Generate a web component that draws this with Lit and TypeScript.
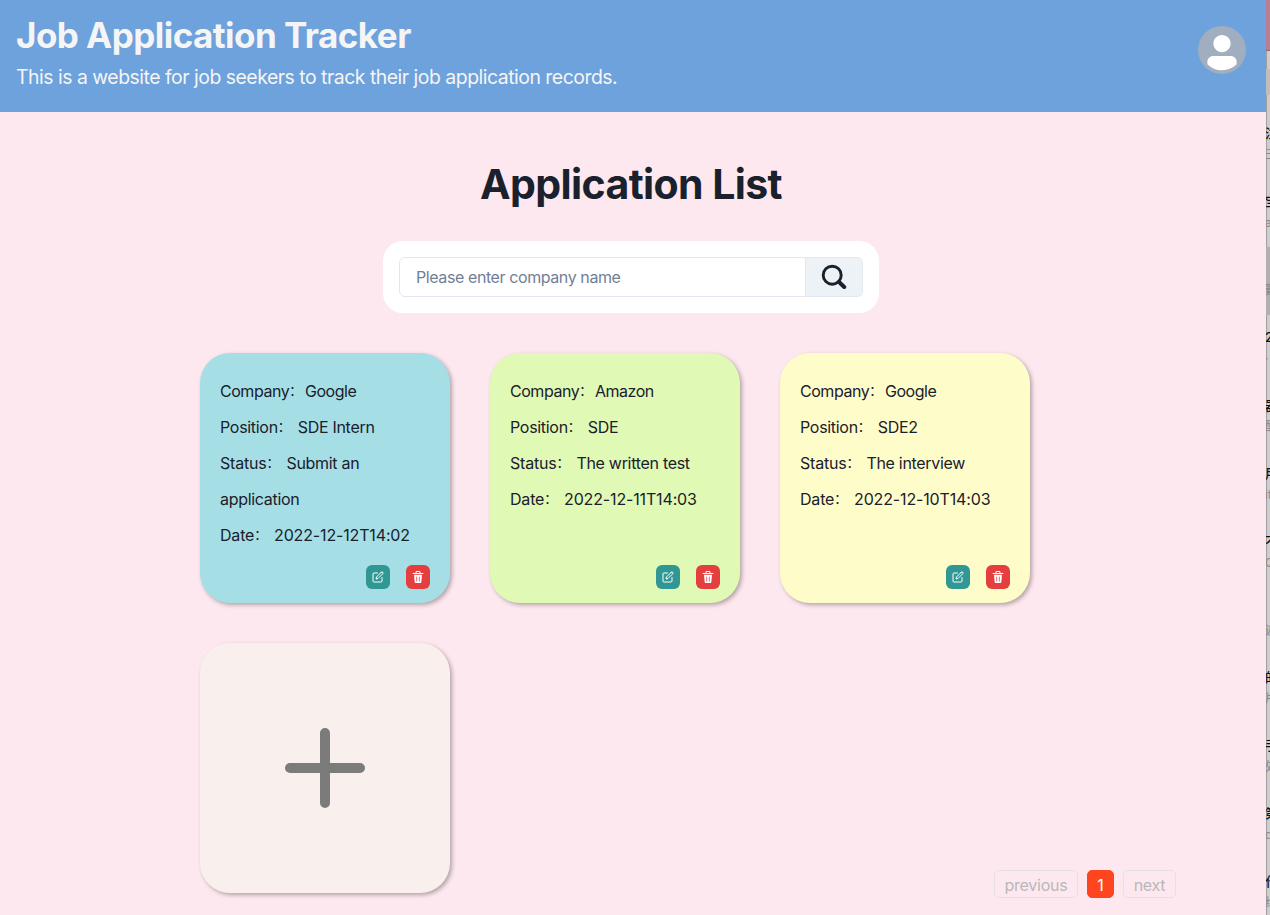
import { LitElement, html, css, svg } from "lit";
import { customElement, property } from "lit/decorators.js";
import { classMap } from "lit/directives/class-map.js";

interface Application {
  company: string;
  position: string;
  status: string;
  date: string;
  tone: "blue" | "green" | "yellow";
}

const applications: Application[] = [
  { company: "Google", position: "SDE Intern", status: "Submit an application", date: "2022-12-12T14:02", tone: "blue" },
  { company: "Amazon", position: "SDE", status: "The written test", date: "2022-12-11T14:03", tone: "green" },
  { company: "Google", position: "SDE2", status: "The interview", date: "2022-12-10T14:03", tone: "yellow" },
];

const editIcon = svg`<g fill="none" stroke="currentColor" stroke-linecap="round" stroke-width="2">
  <path d="M11 4H4a2 2 0 0 0-2 2v14a2 2 0 0 0 2 2h14a2 2 0 0 0 2-2v-7"/>
  <path d="M18.5 2.5a2.121 2.121 0 0 1 3 3L12 15l-4 1 1-4 9.5-9.5z"/></g>`;

const deleteIcon = svg`<path fill="currentColor" d="M19.452 7.5H4.547a.5.5 0 00-.5.545l1.287 14.136A2 2 0 007.326 24h9.347a2 2 0 001.992-1.819L19.95 8.045a.5.5 0 00-.129-.382.5.5 0 00-.369-.163zm-9.2 13a.75.75 0 01-1.5 0v-9a.75.75 0 011.5 0zm5 0a.75.75 0 01-1.5 0v-9a.75.75 0 011.5 0zM22 4h-4.75a.25.25 0 01-.25-.25V2.5A2.5 2.5 0 0014.5 0h-5A2.5 2.5 0 007 2.5v1.25a.25.25 0 01-.25.25H2a1 1 0 000 2h20a1 1 0 000-2zM9 3.75V2.5a.5.5 0 01.5-.5h5a.5.5 0 01.5.5v1.25a.25.25 0 01-.25.25h-5.5A.25.25 0 019 3.75z"/>`;

@customElement("application-card")
class ApplicationCard extends LitElement {
  @property({ attribute: false }) item!: Application;

  static styles = css`
    :host { display: block; }
    .card {
      box-sizing: border-box; width: 250px; height: 250px; padding: 20px 20px 14px;
      border-radius: 30px; box-shadow: 2px 2px 4px rgba(0, 0, 0, 0.3);
      display: flex; flex-direction: column; justify-content: space-between;
      line-height: 36px; letter-spacing: -0.3px;
    }
    .blue { background: #a5dfe5; }
    .green { background: #e0f9b5; }
    .yellow { background: #fefdca; }
    .line { margin: 0; height: 36px; }
    .wrap { height: auto; }
    .company { letter-spacing: -0.46px; }
    .label { letter-spacing: -0.2px; }
    .colon { font-size: 13px; line-height: 1; margin-right: 2.7px; letter-spacing: 0; vertical-align: 2px; }
    .date { letter-spacing: -0.15px; }
    .actions { display: flex; justify-content: flex-end; gap: 16px; }
    .btn {
      width: 24px; height: 24px; padding: 0; border: 0; border-radius: 6px; color: #fff;
      display: flex; align-items: center; justify-content: center;
    }
    .edit { background: #319795; }
    .delete { background: #e53e3e; }
    .icon { width: 12px; height: 12px; display: block; }
  `;

  render() {
    const a = this.item;
    const colon = html`<span class="colon">：</span>`;
    return html`<article class=${classMap({ card: true, [a.tone]: true })}>
      <div>
        <p class="line company">Company${colon}${a.company}</p>
        <p class="line">Position${colon} ${a.position}</p>
        <p class="line wrap"><span class="label">Status</span>${colon} ${a.status}</p>
        <p class="line"><span class="label">Date</span>${colon} <span class="date">${a.date}</span></p>
      </div>
      <div class="actions">
        <button class="btn edit"><svg class="icon" viewBox="0 0 24 24">${editIcon}</svg></button>
        <button class="btn delete"><svg class="icon" viewBox="0 0 24 24">${deleteIcon}</svg></button>
      </div>
    </article>`;
  }
}

const conversations = [
  { title: "注", note: "彐" },
  { title: "宝", note: "a" },
  { title: "", note: "難", active: true },
  { title: "2", note: "·" },
  { title: "器", note: "酸" },
  { title: "用", note: "it" },
  { title: "不", note: "Q" },
  { title: "", note: "逅" },
  { title: "的", note: "片" },
  { title: "手", note: "处" },
  { title: "第", note: "d" },
  { title: "代", note: "给" },
];

@customElement("window-edge")
class WindowEdge extends LitElement {
  static styles = css`
    :host { display: block; width: 4px; overflow: hidden; background: #cdcdcd; box-shadow: inset 1px 0 #a0a0a0; }
    .top { height: 51px; background: #b87e96; box-sizing: border-box; border-bottom: 1px solid #8b6675; }
    .band { height: 18px; }
    .shade { height: 26px; background: #bebebe; }
    .gap { height: 16px; }
    .row { height: 68px; display: flex; flex-direction: column; padding-top: 12px; box-sizing: border-box; overflow: hidden; }
    .active { background: #b0b0b0; }
    .title { height: 20px; line-height: 20px; font-size: 13px; font-weight: 500; color: #111; white-space: nowrap; text-indent: -1px; }
    .note { height: 24px; line-height: 24px; font-size: 12px; color: #8a8a8a; white-space: nowrap; text-indent: -1px; }
  `;

  render() {
    return html`<div class="top"></div><div class="band"></div><div class="shade"></div><div class="gap"></div>
      ${conversations.map(c => html`<div class=${classMap({ row: true, active: !!c.active })}>
        <div class="title">${c.title}</div><div class="note">${c.note}</div></div>`)}`;
  }
}

@customElement("app-root")
class AppRoot extends LitElement {
  static styles = css`
    :host {
      display: flex; width: 1270px; height: 915px; overflow: hidden; color: #1a202c;
      font-family: Inter, "Noto Sans CJK SC", sans-serif; font-size: 16px;
    }
    .page { width: 1266px; height: 915px; background: #fee8ef; display: flex; flex-direction: column; }
    .edge { height: 915px; }
    .header {
      height: 112px; box-sizing: border-box; padding: 14px 20px 0 16px; background: #6ea2dc; color: #f5f5f5;
      display: flex; justify-content: space-between;
    }
    .brand { margin: 0; font-size: 35px; line-height: 43px; font-weight: 700; letter-spacing: -0.54px; white-space: nowrap; }
    .tagline { margin: 5px 0 0; font-size: 19.4px; line-height: 30px; letter-spacing: -0.48px; white-space: nowrap; }
    .avatar { width: 48px; height: 48px; margin-top: 12px; border-radius: 50%; background: #a0aec0; color: #fff; display: block; }
    .heading { margin: 47px 0 0; width: 1262px; text-align: center; font-size: 41px; line-height: 50px; font-weight: 700; letter-spacing: -0.6px; }
    .search {
      box-sizing: border-box; width: 496px; height: 72px; margin: 32px 0 0 383px; padding: 16px;
      border-radius: 20px; background: #fff; display: flex;
    }
    .field {
      box-sizing: border-box; width: 407px; height: 40px; padding: 0 16px; border: 1px solid #e2e8f0; border-radius: 6px 0 0 6px;
      background: #fff; font: inherit; letter-spacing: -0.41px; color: #1a202c; outline: none;
    }
    .field::placeholder { color: #718096; opacity: 1; }
    .go {
      box-sizing: border-box; width: 57px; height: 40px; border: 1px solid #e2e8f0; border-left: 0; border-radius: 0 6px 6px 0;
      padding: 0; background: #edf2f7; color: #1a202c; display: flex; align-items: center; justify-content: center;
    }
    .glass { width: 26px; height: 26px; display: block; }
    .grid { display: grid; grid-template-columns: repeat(3, 250px); gap: 40px; margin: 40px 0 0 200px; }
    .add {
      width: 250px; height: 250px; border: 0; padding: 0; border-radius: 30px; background: #f9f0ee; box-shadow: 2px 2px 4px rgba(0, 0, 0, 0.3);
      display: flex; align-items: center; justify-content: center;
    }
    .plus { width: 80px; height: 80px; display: block; }
    .pager { display: flex; gap: 9px; margin: -23px 90px 0 0; justify-content: flex-end; color: #b8b8b8; letter-spacing: -0.25px; }
    .pg {
      box-sizing: border-box; height: 28px; border: 1px solid #e5e0e5; border-radius: 5px; line-height: 29px; text-align: center;
    }
    .prev { width: 84px; }
    .next { width: 53px; }
    .current { width: 27px; background: #ff4520; border-color: #ff4520; color: #fff; }
  `;

  render() {
    return html`
      <main class="page">
        <header class="header">
          <div>
            <h1 class="brand">Job Application Tracker</h1>
            <p class="tagline">This is a website for job seekers to track their job application records.</p>
          </div>
          <svg class="avatar" viewBox="0 0 128 128" fill="currentColor">
            <path d="M103,102.1388 C93.094,111.92 79.3504,118 64.1638,118 C48.8056,118 34.9294,111.768 25,101.7892 L25,95.2 C25,86.8096 31.981,80 40.6,80 L87.4,80 C96.019,80 103,86.8096 103,95.2 L103,102.1388 Z"/>
            <path d="M63.9961647,24 C51.2938136,24 41,34.2938136 41,46.9961647 C41,59.7061864 51.2938136,70 63.9961647,70 C76.6985159,70 87,59.7061864 87,46.9961647 C87,34.2938136 76.6985159,24 63.9961647,24"/>
          </svg>
        </header>
        <h2 class="heading">Application List</h2>
        <div class="search">
          <input class="field" placeholder="Please enter company name" />
          <button class="go"><svg class="glass" viewBox="0 0 26 26" fill="none" stroke="currentColor">
            <circle cx="11.2" cy="11.2" r="9" stroke-width="2.9"/>
            <path d="M18 18L23.2 23" stroke-width="4" stroke-linecap="round"/>
          </svg></button>
        </div>
        <section class="grid">
          ${applications.map(a => html`<application-card .item=${a}></application-card>`)}
          <button class="add"><svg class="plus" viewBox="0 0 80 80" stroke="#7b7b7b" stroke-width="10" stroke-linecap="round"><path d="M40 5V75M5 40H75"/></svg></button>
        </section>
        <nav class="pager">
          <span class="pg prev">previous</span><span class="pg current">1</span><span class="pg next">next</span>
        </nav>
      </main>
      <window-edge class="edge"></window-edge>`;
  }
}
